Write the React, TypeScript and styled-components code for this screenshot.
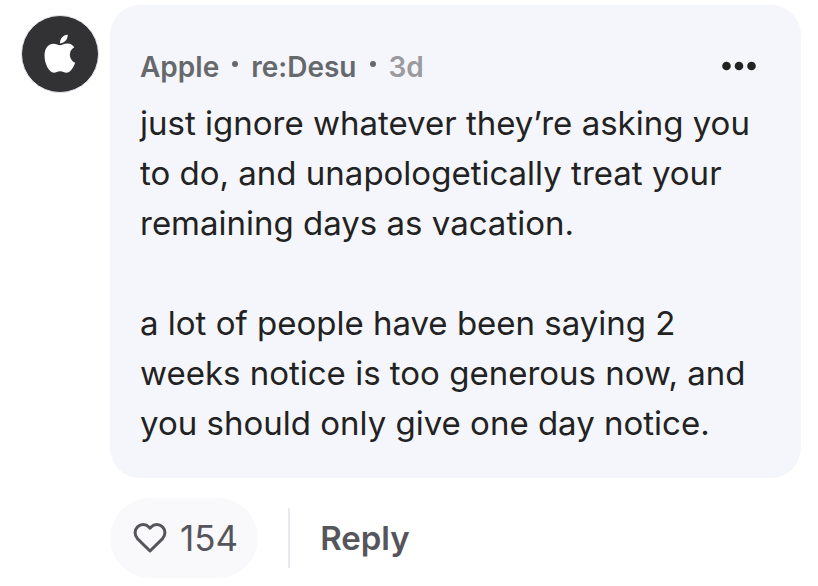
import React from "react";
import styled, { createGlobalStyle } from "styled-components";

const GlobalStyle = createGlobalStyle`
  *, *::before, *::after { box-sizing: border-box; }
  body {
    margin: 0;
    background: #ffffff;
    color: #222222;
    font-family: Inter, "Liberation Sans", sans-serif;
  }
  button { font: inherit; border: 0; padding: 0; background: none; cursor: pointer; }
`;

const Comment = styled.article`
  display: grid;
  grid-template-columns: 78px minmax(0, 1fr);
  column-gap: 11px;
  padding: 5px 17px 8px 21px;
`;

const Avatar = styled.div`
  display: flex;
  align-items: center;
  justify-content: center;
  width: 78px;
  height: 78px;
  margin-top: 10px;
  border: 1px solid #e4e4ea;
  border-radius: 50%;
  background: #323234;
  color: #ffffff;
`;

const Card = styled.section`
  padding: 30px;
  border-radius: 30px;
  background: #f5f6fb;
`;

const Header = styled.header`
  display: flex;
  align-items: center;
  justify-content: space-between;
  height: 63px;
`;

const Meta = styled.div`
  display: flex;
  align-items: center;
  gap: 13px;
  font-size: 28px;
  line-height: 40px;
  font-weight: 600;
`;

const AuthorLink = styled.a`
  color: #66696c;
  text-decoration: none;
`;

const Age = styled.time`
  color: #9a9a9f;
`;

const Separator = styled.span`
  width: 6px;
  height: 6px;
  margin-bottom: 6px;
  border-radius: 50%;
  background: #66696c;
`;

const MoreButton = styled.button`
  display: flex;
  padding: 10px 14px 12px;
  color: #222222;
`;

const Paragraph = styled.p`
  margin: 0;
  font-size: 33px;
  line-height: 50px;

  & + & { margin-top: 50px; }
`;

const Actions = styled.footer`
  grid-column: 2;
  display: flex;
  align-items: center;
  gap: 30px;
  margin-top: 20px;
  color: #55555b;
  line-height: 50px;
`;

const LikeButton = styled.button`
  display: flex;
  align-items: center;
  gap: 13px;
  height: 80px;
  padding: 0 20px 0 23px;
  border-radius: 40px;
  background: #f9f9fc;
  color: inherit;
  font-size: 35px;
`;

const Divider = styled.span`
  width: 2px;
  height: 60px;
  background: #e8e8f0;
`;

const ReplyButton = styled.button`
  color: inherit;
  font-size: 33px;
  font-weight: 600;
`;

const HeartIcon = () => (
  <svg width="34" height="32" viewBox="0 0 34 32" fill="none" aria-hidden="true">
    <path
      d="M17 29 4.4 16.6C1.3 13.2 1.3 7.9 4.5 4.8 7.8 1.7 12.9 1.8 15.8 4.9L17 6.2l1.2-1.3C21.1 1.8 26.2 1.7 29.5 4.8c3.2 3.1 3.2 8.4.1 11.8Z"
      stroke="currentColor"
      strokeWidth="3"
      strokeLinejoin="round"
    />
  </svg>
);

const MoreIcon = () => (
  <svg width="36" height="10" viewBox="0 0 36 10" fill="currentColor" aria-hidden="true">
    <circle cx="5.5" cy="5" r="4.3" />
    <circle cx="18" cy="5" r="4.3" />
    <circle cx="30.5" cy="5" r="4.3" />
  </svg>
);

const AppleIcon = () => (
  <svg width="32" height="40" viewBox="0 0 32 40" fill="currentColor" role="img" aria-label="Apple">
    <path d="M16 9.4C15.8 4.8 18.9 1.4 23.6.6 24.1 5 20.8 9.2 16 9.4Z" />
    <path d="M16 11.2C18.2 11.2 20.2 9.5 23.4 9.5 26.4 9.5 28.8 11 30.2 13.2 27.5 14.9 25.9 17.3 25.9 20.6 25.9 24.4 28 27.5 31.2 28.8 29.8 32.8 26.4 38.8 22.6 38.8 20.2 38.8 19 37.3 16.2 37.3 13.4 37.3 12 38.8 9.8 38.8 5.4 38.8.5 30.4.5 21.6.5 14 4.8 9.7 9.4 9.7 12.4 9.7 14 11.2 16 11.2Z" />
  </svg>
);

export default function App() {
  return (
    <>
      <GlobalStyle />
      <Comment>
        <Avatar>
          <AppleIcon />
        </Avatar>
        <Card>
          <Header>
            <Meta>
              <AuthorLink href="#company">Apple</AuthorLink>
              <Separator />
              <AuthorLink href="#author">re:Desu</AuthorLink>
              <Separator />
              <Age>3d</Age>
            </Meta>
            <MoreButton type="button" aria-label="More options">
              <MoreIcon />
            </MoreButton>
          </Header>
          <Paragraph>
            just ignore whatever they’re asking you to do, and unapologetically
            treat your remaining days as vacation.
          </Paragraph>
          <Paragraph>
            a lot of people have been saying 2 weeks notice is too generous now,
            and you should only give one day notice.
          </Paragraph>
        </Card>
        <Actions>
          <LikeButton type="button" aria-label="Like, 154 likes">
            <HeartIcon />
            154
          </LikeButton>
          <Divider />
          <ReplyButton type="button">Reply</ReplyButton>
        </Actions>
      </Comment>
    </>
  );
}
